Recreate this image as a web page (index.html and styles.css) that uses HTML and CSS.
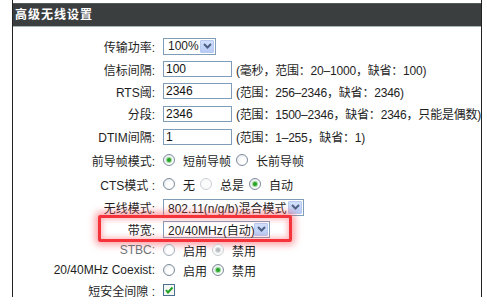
FILE: index.html
```html
<!DOCTYPE html>
<html lang="zh-CN">
<head>
    <meta charset="UTF-8">
    <title>高级无线设置</title>
    <link rel="stylesheet" href="styles.css">
</head>
<body>
    <div class="panel">
        <div class="panelTitle">高级无线设置</div>
        <div class="form">
            <div class="row tall">
                <span class="label">传输功率:</span>
                <span class="select small">
                    <span class="selectText">100%</span>
                    <span class="selectBtn"><svg width="9" height="6" viewBox="0 0 9 6"><path d="M1 1 L4.5 4.5 L8 1" fill="none" stroke="#4d6185" stroke-width="2"/></svg></span>
                </span>
            </div>
            <div class="row">
                <span class="label">信标间隔:</span>
                <input type="text" class="textInput" value="100">
                <span class="hint">(毫秒，范围：20–1000，缺省：100)</span>
            </div>
            <div class="row">
                <span class="label">RTS阈:</span>
                <input type="text" class="textInput" value="2346">
                <span class="hint">(范围：256–2346，缺省：2346)</span>
            </div>
            <div class="row mid">
                <span class="label">分段:</span>
                <input type="text" class="textInput" value="2346">
                <span class="hint">(范围：1500–2346，缺省：2346，只能是偶数)</span>
            </div>
            <div class="row mid">
                <span class="label">DTIM间隔:</span>
                <input type="text" class="textInput" value="1">
                <span class="hint">(范围：1–255，缺省：1)</span>
            </div>
            <div class="row tall">
                <span class="label">前导帧模式:</span>
                <span class="opt"><span class="radio checked"></span>短前导帧</span>
                <span class="opt"><span class="radio"></span>长前导帧</span>
            </div>
            <div class="row tall">
                <span class="label">CTS模式 :</span>
                <span class="opt"><span class="radio"></span>无</span>
                <span class="opt"><span class="radio faint"></span>总是</span>
                <span class="opt"><span class="radio checked"></span>自动</span>
            </div>
            <div class="row">
                <span class="label">无线模式:</span>
                <span class="select wide">
                    <span class="selectText">802.11(n/g/b)混合模式</span>
                    <span class="selectBtn"><svg width="9" height="6" viewBox="0 0 9 6"><path d="M1 1 L4.5 4.5 L8 1" fill="none" stroke="#4d6185" stroke-width="2"/></svg></span>
                </span>
            </div>
            <div class="row">
                <div class="highlight"></div>
                <span class="label">带宽:</span>
                <span class="select medium">
                    <span class="selectText">20/40MHz(自动)</span>
                    <span class="selectBtn"><svg width="9" height="6" viewBox="0 0 9 6"><path d="M1 1 L4.5 4.5 L8 1" fill="none" stroke="#4d6185" stroke-width="2"/></svg></span>
                </span>
            </div>
            <div class="row short">
                <span class="label muted">STBC:</span>
                <span class="opt"><span class="radio dim"></span>启用</span>
                <span class="opt"><span class="radio faint checked"></span>禁用</span>
            </div>
            <div class="row short">
                <span class="label">20/40MHz Coexist:</span>
                <span class="opt"><span class="radio"></span>启用</span>
                <span class="opt"><span class="radio checked"></span>禁用</span>
            </div>
            <div class="row short">
                <span class="label">短安全间隙 :</span>
                <span class="checkbox"><svg width="10" height="10" viewBox="0 0 10 10"><path d="M2 5 L4 7.5 L8.5 2.5" fill="none" stroke="#21a121" stroke-width="2"/></svg></span>
            </div>
        </div>
    </div>
</body>
</html>
```

FILE: styles.css
```css
body {
    margin: 0;
    font-family: "Liberation Sans", "Noto Sans CJK SC", sans-serif;
    font-size: 12px;
    color: #1e1e1e;
    background: #fff;
    overflow: hidden;
}
.panel {
    margin-left: 12px;
    width: 470px;
    height: 297px;
    box-sizing: border-box;
    border-left: 1px solid #222;
    border-right: 1px solid #222;
    padding-top: 3px;
}
.panelTitle {
    height: 22px;
    line-height: 22px;
    background: #3b3e3f;
    border-top: 1px solid #54595b;
    border-bottom: 1px solid #a8b6b6;
    color: #fff;
    font-weight: bold;
    letter-spacing: 1px;
    padding-left: 2px;
}
.form {
    padding-top: 7px;
}
.row {
    display: flex;
    align-items: center;
    height: 22px;
    position: relative;
    white-space: nowrap;
}
.row.tall {
    height: 24px;
}
.row.mid {
    height: 23px;
}
.row.short {
    height: 20px;
}
.label {
    flex: none;
    width: 142px;
    margin-right: 8px;
    text-align: right;
}
.label.muted {
    color: #6f7378;
}
.textInput {
    width: 69px;
    height: 16px;
    box-sizing: border-box;
    border: 1px solid #7f9db9;
    padding: 0 2px;
    margin: 0;
    font: inherit;
    color: #111;
}
.hint {
    margin-left: 4px;
    letter-spacing: -0.2px;
}
.select {
    display: flex;
    align-items: center;
    height: 17px;
    box-sizing: border-box;
    border: 1px solid #7f9db9;
    background: #fff;
    padding: 1px;
}
.select.small {
    width: 53px;
}
.select.wide {
    width: 141px;
}
.select.medium {
    width: 107px;
}
.selectText {
    flex: 1;
    padding-left: 3px;
    overflow: hidden;
}
.selectBtn {
    width: 14px;
    height: 13px;
    box-sizing: border-box;
    background: linear-gradient(#d3e0fb, #b7cbf5);
    border: 1px solid #b6c9f0;
    border-radius: 1px;
    display: flex;
    align-items: center;
    justify-content: center;
}
.opt {
    display: flex;
    align-items: center;
    margin-right: 5px;
}
.radio {
    width: 12px;
    height: 12px;
    box-sizing: border-box;
    border: 1px solid #7d8c9c;
    border-radius: 50%;
    background: radial-gradient(circle at 60% 60%, #fff 30%, #dfe3e8);
    margin-right: 8px;
    display: flex;
    align-items: center;
    justify-content: center;
}
.radio.checked::after {
    content: "";
    width: 4px;
    height: 4px;
    border-radius: 50%;
    background: #2aa32a;
    box-shadow: 0 0 1px 1px #8fd48f;
}
.radio.dim {
    border-color: #a4adb7;
}
.radio.faint {
    border-color: #c9ced4;
    background: #fbfbfb;
}
.radio.faint.checked::after {
    background: #b9bdc2;
    box-shadow: 0 0 1px 1px #d7d9dc;
}
.checkbox {
    width: 12px;
    height: 12px;
    box-sizing: border-box;
    border: 1px solid #4d6f8f;
    background: #f4f6f4;
    display: flex;
    align-items: center;
    justify-content: center;
}
.highlight {
    position: absolute;
    left: 85px;
    top: -3px;
    width: 194px;
    height: 27px;
    box-sizing: border-box;
    border: 3px solid #f5333a;
    border-radius: 2px;
    box-shadow: 0 0 7px 3px rgba(255, 70, 80, 0.5), inset 0 0 5px 2px rgba(255, 90, 100, 0.4);
    pointer-events: none;
}
```
